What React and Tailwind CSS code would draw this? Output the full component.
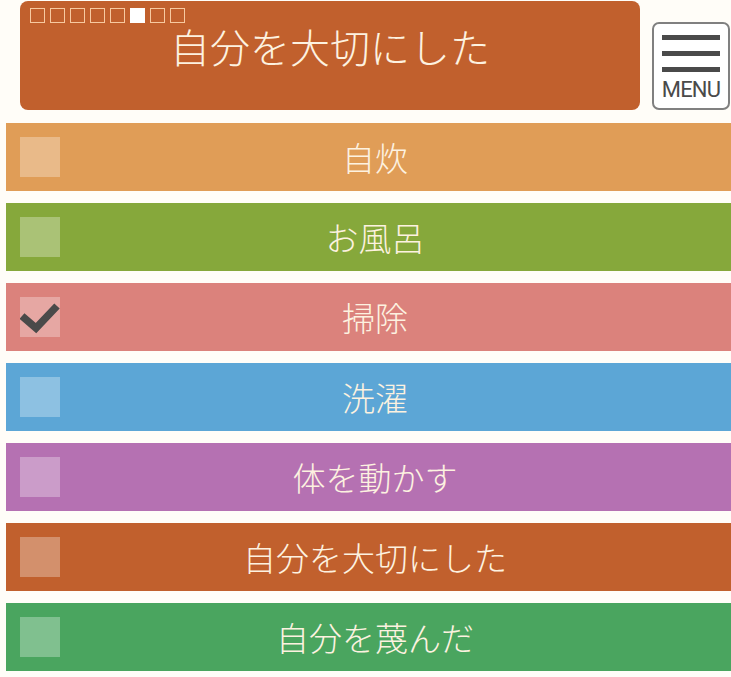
import React from "react";

const rows = [
  { label: "自炊", bg: "bg-[#e09d57]", checked: false },
  { label: "お風呂", bg: "bg-[#86a83b]", checked: false },
  { label: "掃除", bg: "bg-[#db827c]", checked: true },
  { label: "洗濯", bg: "bg-[#5ca6d6]", checked: false },
  { label: "体を動かす", bg: "bg-[#b571b2]", checked: false },
  { label: "自分を大切にした", bg: "bg-[#c1602d]", checked: false },
  { label: "自分を蔑んだ", bg: "bg-[#4aa55f]", checked: false },
];

const dots = [false, false, false, false, false, true, false, false];

const font = { fontFamily: '"Noto Sans CJK JP", "Noto Sans", sans-serif' };

export default function App() {
  return (
    <div className="min-h-[677px] w-[731px] overflow-hidden bg-[#fffdf8]" style={font}>
      <div className="flex items-end gap-[12px] pl-[20px] pt-[1px]">
        <div className="flex h-[109px] w-[620px] flex-col rounded-[8px] bg-[#c1602d]">
          <div className="ml-[10px] mt-[7px] flex gap-[5px]">
            {dots.map((on, i) => (
              <div
                key={i}
                className={
                  on
                    ? "h-[15px] w-[15px] bg-white"
                    : "h-[15px] w-[15px] border-[1.5px] border-[#f7c9a0]"
                }
              />
            ))}
          </div>
          <div className="mt-[3px] text-center text-[40px] font-light leading-[40px] text-[#fdf2e0]">
            自分を大切にした
          </div>
        </div>
        <div className="flex h-[88px] w-[78px] flex-col items-center rounded-[7px] border-2 border-[#808080] bg-white pt-[11px]">
          <div className="flex w-[58px] flex-col gap-[11px]">
            <div className="h-[5px] bg-[#4a4a4a]" />
            <div className="h-[5px] bg-[#4a4a4a]" />
            <div className="h-[5px] bg-[#4a4a4a]" />
          </div>
          <div
            className="mt-[6px] text-[22px] leading-[24px] tracking-[-0.8px] text-[#4a4a4a]"
            style={{ fontFamily: "Roboto, sans-serif" }}
          >
            MENU
          </div>
        </div>
      </div>
      <div className="mt-[13px] flex flex-col gap-[12px] pl-[6px]">
        {rows.map((r) => (
          <div key={r.label} className={`flex h-[68px] items-center px-[14px] ${r.bg}`}>
            <div className="relative h-[40px] w-[40px] shrink-0 bg-white/30">
              {r.checked && (
                <svg viewBox="0 0 40 40" className="absolute left-0 top-0 h-[40px] w-[40px]">
                  <path d="M2 19 L16 31 L37 9" fill="none" stroke="#4a4a4a" strokeWidth="7.5" />
                </svg>
              )}
            </div>
            <div className="mr-[27px] flex-1 text-center text-[33px] font-light leading-none text-[#fdf2e0]">
              {r.label}
            </div>
          </div>
        ))}
      </div>
    </div>
  );
}
